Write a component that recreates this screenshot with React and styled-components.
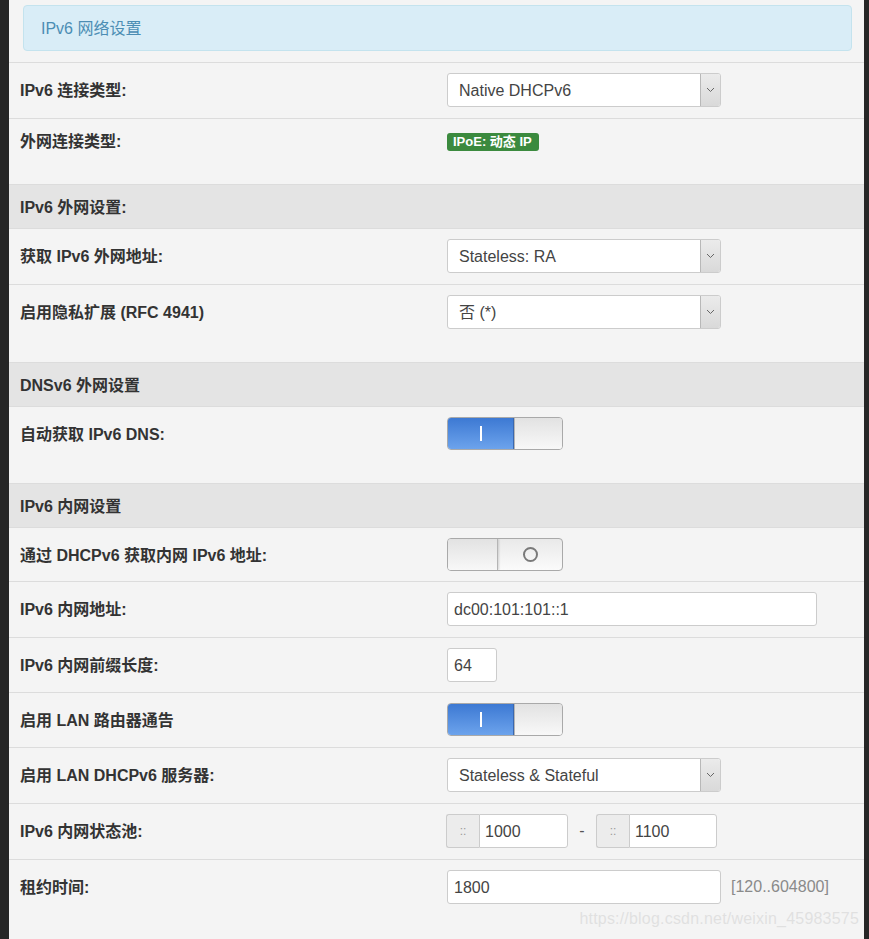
import React from "react";
import styled, { createGlobalStyle } from "styled-components";

const Global = createGlobalStyle`
  html, body { margin: 0; padding: 0; background: #262626; }
  body { font-family: "Liberation Sans", Arial, "Noto Sans CJK SC", sans-serif; }
  * { box-sizing: border-box; }
`;

const Page = styled.div`
  display: flex;
  width: 869px;
  height: 939px;
  overflow: hidden;
  background: #262626;
  position: relative;
`;

const Panel = styled.div`
  margin-left: 9px;
  width: 855px;
  min-height: 939px;
  background: #f4f4f4;
  padding-top: 5px;
`;

const Alert = styled.div`
  margin: 0 12px 11px 14px;
  height: 46px;
  background: #d9edf7;
  border: 1px solid #c4e3ee;
  border-radius: 4px;
  color: #4c8db4;
  font-size: 16px;
  line-height: 44px;
  padding: 1px 0 0 17px;
`;

const Row = styled.div`
  display: grid;
  grid-template-columns: 427px 1fr;
  padding: ${(p) => p.$pt ?? 10}px 11px ${(p) => p.$pb ?? 11}px;
  border-top: 1px solid #dcdcdc;
  align-items: start;
`;

const Label = styled.div`
  font-weight: bold;
  font-size: 16px;
  color: #333;
  padding-top: 2px;
  line-height: ${(p) => (p.$lh ?? 34) - 2}px;
  white-space: nowrap;
`;

const Section = styled.div`
  background: #e4e4e4;
  border-top: 1px solid #dcdcdc;
  padding: 13px 11px 10px;
  font-weight: bold;
  font-size: 16px;
  line-height: 20px;
  color: #333;
`;

const Value = styled.div`
  display: flex;
  align-items: center;
  min-height: ${(p) => p.$h ?? 34}px;
`;

const SelectBox = styled.div`
  width: ${(p) => p.$w ?? 274}px;
  height: 34px;
  display: flex;
  background: #fff;
  border: 1px solid #ccc;
  border-radius: 3px;
  overflow: hidden;
`;

const SelectText = styled.div`
  flex: 1;
  padding: 2px 0 0 11px;
  font-size: 16px;
  line-height: 30px;
  color: #444;
`;

const Arrow = styled.div`
  width: 20px;
  display: flex;
  align-items: center;
  justify-content: center;
  background: linear-gradient(#ebebeb, #d9d9d9);
  border-left: 1px solid #b8b8b8;
`;

const Badge = styled.span`
  display: inline-block;
  background: #3b8a3e;
  color: #fff;
  font-weight: bold;
  font-size: 13px;
  line-height: 18px;
  padding: 0 7px 0 6px;
  border-radius: 3px;
  margin-top: 1px;
`;

const Switch = styled.div`
  width: 116px;
  height: 33px;
  display: flex;
  border: 1px solid #a9a9a9;
  border-radius: 4px;
  overflow: hidden;
  background: linear-gradient(#e9e9e9, #fbfbfb);
`;

const OnPart = styled.div`
  width: 67px;
  display: flex;
  align-items: center;
  justify-content: center;
  background: linear-gradient(#3d79d3, #6ca3ec);
  border-right: 1px solid #3a68b0;
`;

const OffPart = styled.div`
  flex: 1;
  display: flex;
  align-items: center;
  justify-content: center;
`;

const Knob = styled.div`
  width: ${(p) => p.$w}px;
  background: linear-gradient(#e2e2e2, #f8f8f8);
  border-${(p) => (p.$side === "left" ? "right" : "left")}: 1px solid #b5b5b5;
  box-shadow: ${(p) => (p.$side === "left" ? "1px 0 2px rgba(0,0,0,0.15)" : "none")};
`;

const Bar = styled.div`
  width: 2px;
  height: 15px;
  background: #fff;
`;

const Ring = styled.div`
  width: 15px;
  height: 15px;
  border: 2px solid #7a7a7a;
  border-radius: 50%;
`;

const Input = styled.div`
  width: ${(p) => p.$w}px;
  height: 34px;
  background: #fff;
  border: 1px solid #ccc;
  border-radius: ${(p) => (p.$grouped ? "0 3px 3px 0" : "3px")};
  font-size: 16px;
  line-height: 30px;
  color: #444;
  padding-top: 2px;
  padding-left: ${(p) => p.$pl ?? 6}px;
`;

const Group = styled.div`
  display: flex;
  margin-left: ${(p) => p.$ml ?? 0}px;
`;

const Addon = styled.div`
  width: 33px;
  height: 34px;
  background: #ececec;
  border: 1px solid #ccc;
  border-right: none;
  border-radius: 3px 0 0 3px;
  color: #999;
  font-size: 12px;
  line-height: 32px;
  text-align: center;
`;

const Dash = styled.span`
  width: 28px;
  text-align: center;
  color: #555;
  font-size: 16px;
`;

const Hint = styled.span`
  margin-left: 10px;
  color: #8a8a8a;
  font-size: 16px;
`;

const Watermark = styled.div`
  position: absolute;
  right: 10px;
  top: 910px;
  font-size: 16px;
  color: rgba(205, 205, 205, 0.5);
  letter-spacing: 0.2px;
`;

const Chevron = () => (
  <svg width="9" height="6" viewBox="0 0 9 6">
    <path d="M1 1 L4.5 4.5 L8 1" fill="none" stroke="#666" strokeWidth="1" />
  </svg>
);

const Select = ({ children }) => (
  <SelectBox>
    <SelectText>{children}</SelectText>
    <Arrow>
      <Chevron />
    </Arrow>
  </SelectBox>
);

const Toggle = ({ on }) =>
  on ? (
    <Switch>
      <OnPart>
        <Bar />
      </OnPart>
      <Knob $w={48} $side="right" />
    </Switch>
  ) : (
    <Switch>
      <Knob $w={50} $side="left" />
      <OffPart>
        <Ring />
      </OffPart>
    </Switch>
  );

export default function App() {
  return (
    <Page>
      <Global />
      <Panel>
        <Alert>IPv6 网络设置</Alert>

        <Row>
          <Label>IPv6 连接类型:</Label>
          <Value>
            <Select>Native DHCPv6</Select>
          </Value>
        </Row>
        <Row $pt={12} $pb={33}>
          <Label $lh={20}>外网连接类型:</Label>
          <Value $h={20}>
            <Badge>IPoE: 动态 IP</Badge>
          </Value>
        </Row>

        <Section>IPv6 外网设置:</Section>
        <Row>
          <Label>获取 IPv6 外网地址:</Label>
          <Value>
            <Select>Stateless: RA</Select>
          </Value>
        </Row>
        <Row $pb={33}>
          <Label>启用隐私扩展 (RFC 4941)</Label>
          <Value>
            <Select>否 (*)</Select>
          </Value>
        </Row>

        <Section>DNSv6 外网设置</Section>
        <Row $pb={33}>
          <Label $lh={33}>自动获取 IPv6 DNS:</Label>
          <Value $h={33}>
            <Toggle on />
          </Value>
        </Row>

        <Section>IPv6 内网设置</Section>
        <Row $pb={10}>
          <Label $lh={33}>通过 DHCPv6 获取内网 IPv6 地址:</Label>
          <Value $h={33}>
            <Toggle />
          </Value>
        </Row>
        <Row>
          <Label>IPv6 内网地址:</Label>
          <Value>
            <Input $w={370}>dc00:101:101::1</Input>
          </Value>
        </Row>
        <Row $pb={10}>
          <Label>IPv6 内网前缀长度:</Label>
          <Value>
            <Input $w={50}>64</Input>
          </Value>
        </Row>
        <Row $pb={11}>
          <Label $lh={33}>启用 LAN 路由器通告</Label>
          <Value $h={33}>
            <Toggle on />
          </Value>
        </Row>
        <Row>
          <Label>启用 LAN DHCPv6 服务器:</Label>
          <Value>
            <Select>Stateless &amp; Stateful</Select>
          </Value>
        </Row>
        <Row>
          <Label>IPv6 内网状态池:</Label>
          <Value>
            <Group $ml={-1}>
              <Addon>::</Addon>
              <Input $w={89} $grouped $pl={5}>1000</Input>
            </Group>
            <Dash>-</Dash>
            <Group>
              <Addon>::</Addon>
              <Input $w={88} $grouped $pl={5}>1100</Input>
            </Group>
          </Value>
        </Row>
        <Row>
          <Label>租约时间:</Label>
          <Value>
            <Input $w={274}>1800</Input>
            <Hint>[120..604800]</Hint>
          </Value>
        </Row>
      </Panel>
      <Watermark>https://blog.csdn.net/weixin_45983575</Watermark>
    </Page>
  );
}
